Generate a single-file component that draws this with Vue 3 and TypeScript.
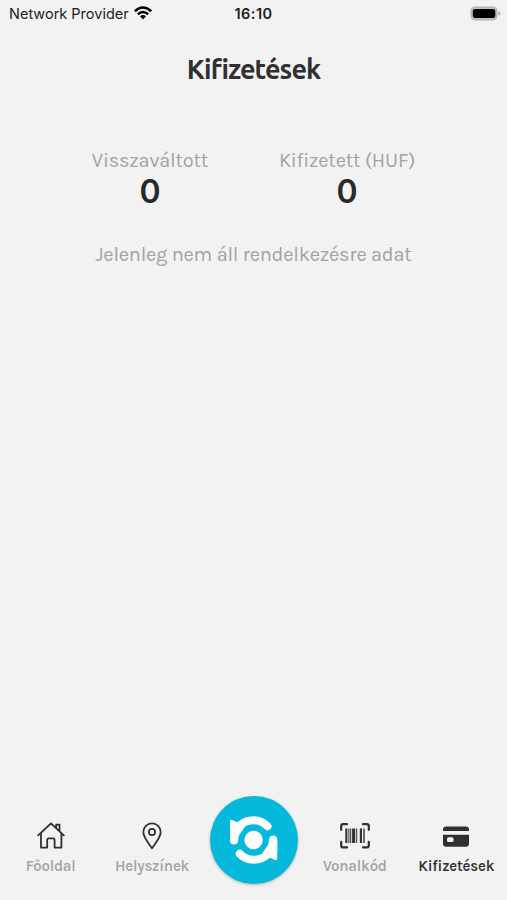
<script setup lang="ts">
interface Stat {
  label: string
  value: number
  kind: string
}

const stats: Stat[] = [
  { label: 'Visszaváltott', value: 0, kind: 'returned' },
  { label: 'Kifizetett (HUF)', value: 0, kind: 'paid' },
]
</script>

<template>
  <main class="screen">
    <header class="status">
      <div class="carrier">
        <span>Network Provider</span>
        <svg class="wifi" viewBox="0 0 20 14" aria-hidden="true">
          <path d="M1.8 5.2Q10-2.2 18.2 5.2" />
          <path d="M4.8 8.2Q10 3.7 15.2 8.2" />
          <path class="solid" d="M7 10.3Q10 7.8 13 10.3L10 13.4Z" />
        </svg>
      </div>
      <time>16:10</time>
      <svg class="battery" viewBox="0 0 31 15" aria-hidden="true">
        <rect x="1.2" y="1.2" width="25.6" height="12.6" rx="3.8" fill="#c4c4c4" stroke="#b4b4b4" stroke-width="1.5" />
        <rect x="2.8" y="2.9" width="22.5" height="9.2" rx="2" fill="#000" />
        <path d="M28.4 5.2Q30.5 6 30.5 7.5T28.4 9.8Z" fill="#ababab" />
      </svg>
    </header>

    <h1>Kifizetések</h1>

    <section class="stats">
      <div v-for="stat in stats" :key="stat.kind" class="stat" :class="stat.kind">
        <span class="label">{{ stat.label }}</span>
        <strong>{{ stat.value }}</strong>
      </div>
    </section>

    <p class="empty">Jelenleg nem áll rendelkezésre adat</p>

    <nav class="tabs">
      <a class="tab home">
        <svg viewBox="0 0 30 30" aria-hidden="true">
          <path d="M2.2 14.4 15 2.3 27.8 14.4M5 12.5V26.6H11.2V18.9Q11.2 17.3 12.8 17.3H17Q18.6 17.3 18.6 18.9V26.6H25.4V12.5M20.2 6.8V3.6H23.5V10" />
        </svg>
        <span>Főoldal</span>
      </a>
      <a class="tab places">
        <svg viewBox="0 0 30 30" aria-hidden="true">
          <path d="M15 27.4C12.6 23.5 6.3 16.8 6.3 11.1A8.7 8.7 0 0 1 23.7 11.1C23.7 16.8 17.4 23.5 15 27.4Z" />
          <circle cx="15" cy="11" r="3.1" />
        </svg>
        <span>Helyszínek</span>
      </a>
      <a class="scan" aria-label="Visszaváltás">
        <svg viewBox="0 0 88 88" aria-hidden="true">
          <circle class="dot" cx="43.6" cy="44" r="9.2" />
          <g v-for="angle in [0, 180]" :key="angle" :transform="`rotate(${angle} 43.6 44)`">
            <path class="dot" d="M20 25.4Q20 23.4 22 24L27.3 26.3 36 21.5V29L26 44H20Z" />
            <path d="M24 32V44.5M24.4 43C24.4 31.5 33 24.2 43.5 24.2C49 24.2 53.8 26.3 57.5 30.2" />
          </g>
        </svg>
      </a>
      <a class="tab barcode">
        <svg viewBox="0 0 30 30" aria-hidden="true">
          <path class="frame" d="M7 3.2H3.2Q1.2 3.2 1.2 5.2V8.8M23 3.2H26.8Q28.8 3.2 28.8 5.2V8.8M1.2 20.8V24.4Q1.2 26.4 3.2 26.4H7M28.8 20.8V24.4Q28.8 26.4 26.8 26.4H23" />
          <path class="bars" d="M5.3 7.5H7.4V22.1H5.3ZM8.4 7.5H9.4V22.1H8.4ZM10.2 7.5H11.2V22.1H10.2ZM12.1 7.5H15.2V22.1H12.1ZM16.2 7.5H17.2V22.1H16.2ZM19.8 7.5H22V22.1H19.8ZM23.3 7.5H24.7V22.1H23.3Z" />
        </svg>
        <span>Vonalkód</span>
      </a>
      <a class="tab payouts active">
        <svg viewBox="0 0 30 30" aria-hidden="true">
          <path class="solid" d="M2 10V8.8Q2 5.5 5.3 5.5H24.7Q28 5.5 28 8.8V10Z" />
          <path class="solid" fill-rule="evenodd" d="M2 13.7H28V22.5Q28 25.8 24.7 25.8H5.3Q2 25.8 2 22.5ZM7.7 16.3Q6 16.3 6 18V19.5Q6 21.1 7.7 21.1H10.9Q12.6 21.1 12.6 19.5V18Q12.6 16.3 10.9 16.3Z" />
        </svg>
        <span>Kifizetések</span>
      </a>
    </nav>
  </main>
</template>

<style>
body {
  background: #f2f2f2;
}
</style>

<style scoped>
.screen {
  box-sizing: border-box;
  width: 507px;
  height: 900px;
  display: flex;
  flex-direction: column;
  overflow: hidden;
  background: #f2f2f2;
  color: #303030;
  font-family: Karla, Roboto, sans-serif;
}
.status {
  height: 28px;
  display: grid;
  grid-template-columns: 1fr auto 1fr;
  align-items: center;
  padding: 0 6px 0 9px;
  color: #1c1c1c;
  font: 400 14.5px/28px Inter, sans-serif;
}
.carrier {
  display: flex;
  align-items: center;
  gap: 4px;
  white-space: nowrap;
}
.wifi {
  width: 20px;
  height: 14px;
  margin-top: -2px;
  fill: none;
  stroke: #000;
  stroke-width: 2.5;
}
.wifi .solid {
  fill: #000;
  stroke: none;
}
time {
  margin-left: -3px;
  font-weight: 600;
  letter-spacing: 0.5px;
}
.battery {
  width: 31px;
  height: 15px;
  justify-self: end;
  margin-top: -2px;
}
h1 {
  margin: 23px 0 0;
  height: 36px;
  text-align: center;
  font: 700 27px/36px Ubuntu, "Noto Sans", sans-serif;
  letter-spacing: -0.9px;
}
.stats {
  display: grid;
  grid-template-columns: 197px 197px;
  justify-content: center;
  margin: 62px 0 0 -10px;
}
.stat {
  display: flex;
  flex-direction: column;
  align-items: center;
}
.label {
  color: #a2a2a2;
  font-size: 20px;
  line-height: 24px;
  letter-spacing: -0.2px;
  white-space: nowrap;
}
.stat strong {
  margin-top: 1px;
  font: 600 32px/35px Inter, sans-serif;
  color: #292929;
}
.empty {
  margin: 34px 0 0;
  height: 24px;
  color: #a2a2a2;
  text-align: center;
  font-size: 20px;
  line-height: 24px;
  letter-spacing: -0.22px;
}
.tabs {
  margin-top: auto;
  height: 110px;
  display: grid;
  grid-template-columns: repeat(5, 1fr);
  align-items: start;
}
.tab {
  display: flex;
  flex-direction: column;
  align-items: center;
  padding-top: 31px;
  color: #a4a4a4;
  font-size: 15px;
  font-weight: 600;
  line-height: 20px;
  letter-spacing: -0.2px;
  white-space: nowrap;
}
.tab svg {
  width: 30px;
  height: 30px;
  margin-bottom: 5px;
  fill: none;
  stroke: #303030;
  stroke-width: 1.8;
  stroke-linecap: round;
  stroke-linejoin: round;
}
.tab .solid,
.tab .bars {
  fill: #303030;
  stroke: none;
}
.tab .frame {
  stroke-width: 2.2;
}
.tab.active {
  color: #303030;
}
.scan {
  width: 88px;
  height: 88px;
  margin: 6px -1px 0 0;
  justify-self: center;
  border-radius: 50%;
  background: #04b9dc;
  box-shadow: 0 1px 3px rgba(0, 0, 0, 0.25);
}
.scan svg {
  display: block;
  width: 88px;
  height: 88px;
  fill: none;
  stroke: #fff;
  stroke-width: 8px;
  stroke-linecap: round;
}
.scan .dot {
  fill: #fff;
  stroke: none;
}
</style>
